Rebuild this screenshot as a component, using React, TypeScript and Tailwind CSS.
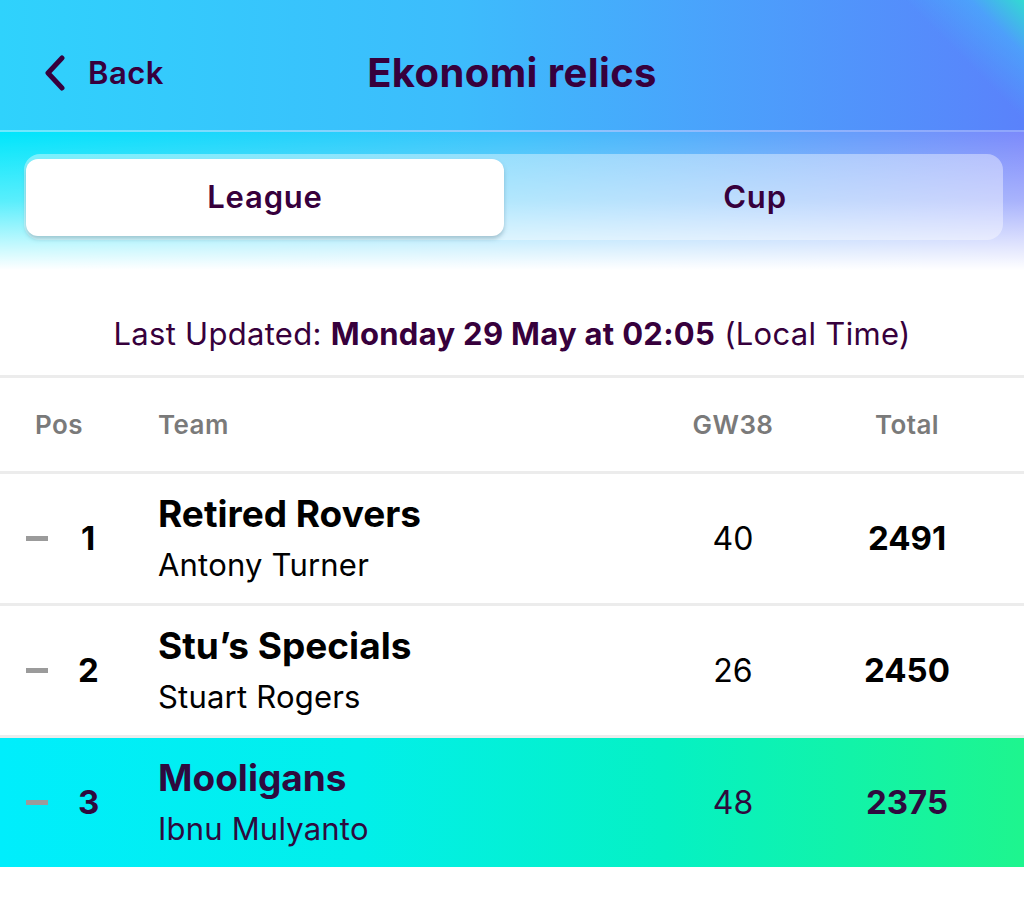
import React from "react";

const rows = [
  { pos: 1, team: "Retired Rovers", manager: "Antony Turner", gw: 40, total: 2491, me: false },
  { pos: 2, team: "Stu’s Specials", manager: "Stuart Rogers", gw: 26, total: 2450, me: false },
  { pos: 3, team: "Mooligans", manager: "Ibnu Mulyanto", gw: 48, total: 2375, me: true },
];

export default function App() {
  return (
    <div className="w-[1024px] h-[897px] bg-white overflow-hidden font-['Inter',sans-serif] text-[#37003c]">
      {/* Top bar */}
      <div className="relative h-[130px] bg-[linear-gradient(90deg,#2fd2fc_0%,#3dbcfc_45%,#5a82fb_100%)] overflow-hidden">
        <div className="absolute right-0 top-0 w-[160px] h-[140px] bg-[linear-gradient(225deg,rgba(40,240,200,0.8)_0%,rgba(60,200,250,0.4)_18%,rgba(90,130,251,0)_40%)]" />
        <div className="relative flex items-center h-full pt-[16px]">
          <div className="flex items-center pl-[42px] w-[260px]">
            <svg width="26" height="36" viewBox="0 0 26 36" className="shrink-0">
              <path d="M20 3 L6 18 L20 33" fill="none" stroke="#37003c" strokeWidth="5" strokeLinecap="round" strokeLinejoin="round" />
            </svg>
            <span className="ml-[20px] text-[31px] font-semibold tracking-[0.5px]">Back</span>
          </div>
          <div className="absolute left-0 right-0 top-[16px] bottom-0 flex items-center justify-center pointer-events-none">
            <span className="text-[40px] font-bold tracking-[0.4px]">Ekonomi relics</span>
          </div>
        </div>
      </div>
      <div className="h-[2px] bg-[linear-gradient(90deg,#6ee9fd,#90c8fd,#8fa5fc)]" />
      {/* Tabs area */}
      <div className="relative h-[138px] bg-[linear-gradient(90deg,#00e6fb_0%,#3ec2fb_50%,#7c8afb_100%)]">
        <div className="absolute inset-0 bg-[linear-gradient(180deg,rgba(255,255,255,0)_0%,rgba(255,255,255,0.35)_50%,rgba(255,255,255,1)_100%)]" />
        <div className="relative pl-[24px] pr-[21px] pt-[22px]">
          <div className="flex h-[86px] rounded-[16px] bg-white/40 p-[3px] pl-[2px]">
            <div className="w-[478px] h-[77px] mt-[2px] rounded-[12px] bg-white shadow-[0_3px_4px_rgba(60,110,130,0.35)] flex items-center justify-center">
              <span className="text-[31px] font-semibold tracking-[0.8px]">League</span>
            </div>
            <div className="flex-1 flex items-center justify-center pl-[6px]">
              <span className="text-[31px] font-semibold tracking-[0.8px]">Cup</span>
            </div>
          </div>
        </div>
      </div>
      {/* Last updated */}
      <div className="h-[105px] flex items-start justify-center pt-[44px]">
        <p className="text-[31px] leading-[40px] tracking-[0.3px]">
          Last Updated: <span className="font-bold">Monday 29 May at 02:05</span> (Local Time)
        </p>
      </div>
      <div className="h-[3px] bg-[#ececec]" />
      {/* Header row */}
      <div className="h-[93px] flex items-center text-[26px] font-semibold text-[#7a7a7a] tracking-[0.4px]">
        <div className="w-[158px] pl-[35px]">Pos</div>
        <div className="flex-1">Team</div>
        <div className="w-[130px] text-center">GW38</div>
        <div className="w-[140px] ml-[39px] mr-[47px] text-center">Total</div>
      </div>
      <div className="h-[3px] bg-[#ececec]" />
      {rows.map((r, i) => (
        <React.Fragment key={r.pos}>
          <div
            className={
              r.me
                ? "h-[129px] flex items-center text-[#2e0a3e] bg-[linear-gradient(90deg,#00eefc_0%,#02efea_35%,#05f1c4_65%,#1ef58e_100%)]"
                : "h-[129px] flex items-center text-black"
            }
          >
            <div className="w-[158px] flex items-center pl-[26px]">
              <div className="w-[22px] h-[5px] bg-[#9b9b9b]" />
              <div className="w-[20px] ml-[30px] text-center text-[33px] font-bold">{r.pos}</div>
            </div>
            <div className="flex-1 flex flex-col">
              <span className="text-[37px] font-bold leading-[44px] tracking-[0px]">{r.team}</span>
              <span className="text-[31px] leading-[40px] mt-[9px] tracking-[0.2px]">{r.manager}</span>
            </div>
            <div className="w-[130px] text-center text-[32px]">{r.gw}</div>
            <div className="w-[140px] ml-[39px] mr-[47px] text-center text-[33px] font-bold">{r.total}</div>
          </div>
          {i < rows.length - 1 && <div className="h-[3px] bg-[#ececec]" />}
        </React.Fragment>
      ))}
    </div>
  );
}
